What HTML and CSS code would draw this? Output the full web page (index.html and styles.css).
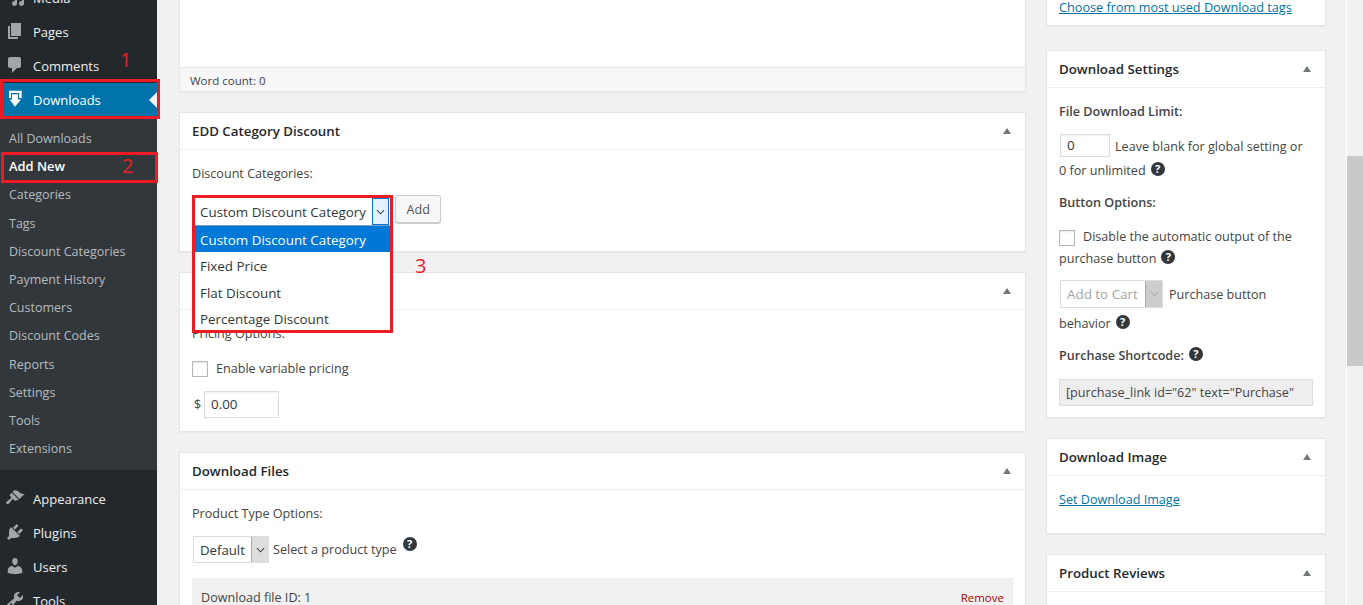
FILE: index.html
```html
<!DOCTYPE html>
<html lang="en">
<head>
<meta charset="utf-8">
<title>Add New Download</title>
<link rel="stylesheet" href="styles.css">
</head>
<body>
<div class="page">
  <nav class="sidebar">
    <ul class="menu menu-top">
      <li class="item"><svg class="ico" viewBox="0 0 20 20"><path d="M13 11V4c0-.55-.45-1-1-1h-1.67L9 1H5L3.67 3H2c-.55 0-1 .45-1 1v7c0 .55.45 1 1 1h10c.55 0 1-.45 1-1zM7 4.5c1.38 0 2.5 1.12 2.5 2.5S8.38 9.5 7 9.5 4.5 8.38 4.5 7 5.62 4.5 7 4.5zM14 6h5v10.5c0 1.38-1.12 2.5-2.5 2.5S14 17.88 14 16.5s1.12-2.5 2.5-2.5c.17 0 .34.02.5.05V9h-3V6zm-4 8.05V13h2v3.5c0 1.38-1.12 2.5-2.5 2.5S7 17.88 7 16.5 8.12 14 9.5 14c.17 0 .34.02.5.05z"/></svg>Media</li>
      <li class="item"><svg class="ico" viewBox="0 0 20 20"><path d="M6 15V2h10v13H6zm-1 1h8v2H3V5h2v11z"/></svg>Pages</li>
      <li class="item"><svg class="ico" viewBox="0 0 20 20"><path d="M5 2h9c1.1 0 2 .9 2 2v7c0 1.1-.9 2-2 2h-2l-5 5v-5H5c-1.1 0-2-.9-2-2V4c0-1.1.9-2 2-2z"/></svg>Comments</li>
      <li class="item item-current"><svg class="ico ico-white" viewBox="0 0 20 20"><path d="M2 .7h12.700V8H12V3H4v5H2z"/><path d="M5 4.300h6v5.200h3L8 16.700 2.800 9.500H5z"/></svg>Downloads</li>
    </ul>
    <ul class="submenu">
      <li>All Downloads</li>
      <li class="sub-current">Add New</li>
      <li>Categories</li>
      <li>Tags</li>
      <li>Discount Categories</li>
      <li>Payment History</li>
      <li>Customers</li>
      <li>Discount Codes</li>
      <li>Reports</li>
      <li>Settings</li>
      <li>Tools</li>
      <li>Extensions</li>
    </ul>
    <ul class="menu menu-bottom">
      <li class="item"><svg class="ico" viewBox="0 0 20 20"><path d="M14.480 11.060L7.410 3.990l1.500-1.500c.5-.56 2.300-.47 3.510.32 1.210.8 1.430 1.280 2.910 2.100 1.180.64 2.450 1.260 4.450.85zm-.71.71L6.700 4.700 4.930 6.470c-.39.39-.39 1.020 0 1.410l1.060 1.060c.39.39.39 1.030 0 1.420-.6.6-1.430 1.110-2.210 1.690-.35.26-.7.53-1.010.84C1.430 13.230.4 14.400 1.500 15.500c1.100 1.100 2.300.13 3.030-.6.4-.4.7-.8.96-1.170.58-.78 1.090-1.610 1.690-2.210.39-.39 1.030-.39 1.420 0l1.060 1.060c.39.39 1.020.39 1.410 0z"/></svg>Appearance</li>
      <li class="item"><svg class="ico" viewBox="0 0 20 20"><path d="M13.110 4.360L9.870 7.600 8 5.730l3.240-3.240c.35-.34 1.050-.2 1.560.32.52.51.66 1.210.31 1.550zm-8 1.770l.91-1.120 9.010 9.010-1.190.84c-.71.71-2.630 1.160-3.820 1.160H6.140L4.900 17.260c-.59.59-1.540.59-2.120 0-.59-.58-.59-1.530 0-2.120l1.240-1.240v-3.880c0-1.130.4-3.190 1.090-3.890zm7.260 3.970l3.240-3.240c.34-.35 1.040-.21 1.550.31.52.51.66 1.210.31 1.550l-3.240 3.250z"/></svg>Plugins</li>
      <li class="item"><svg class="ico" viewBox="0 0 20 20"><path d="M10 9.250c-2.270 0-2.730-3.440-2.730-3.440C7 4.020 7.820 2 9.970 2c2.160 0 2.980 2.020 2.710 3.810 0 0-.41 3.440-2.680 3.440zm0 2.570L12.720 10c2.390 0 4.520 2.330 4.520 4.530v2.490s-3.650 1.130-7.240 1.130c-3.650 0-7.240-1.130-7.240-1.130v-2.490c0-2.250 1.940-4.480 4.470-4.480z"/></svg>Users</li>
      <li class="item"><svg class="ico" viewBox="0 0 20 20"><path d="M16.680 9.770c-1.340 1.340-3.300 1.670-4.950.99l-5.410 6.520c-.99.99-2.590.99-3.580 0s-.99-2.590 0-3.570l6.520-5.420c-.68-1.650-.35-3.610.99-4.950 1.280-1.280 3.120-1.620 4.720-1.060l-2.890 2.890 2.820 2.820 2.890-2.890c.55 1.600.22 3.440-1.060 4.720zm-9.790 5.130c.39-.39.39-1.030 0-1.410-.39-.39-1.030-.39-1.410 0-.39.39-.39 1.030 0 1.410.39.38 1.020.38 1.410 0z"/></svg>Tools</li>
    </ul>
  </nav>

  <main class="content">
    <div class="col-main">
      <section class="card card-editor">
        <div class="editor-space"></div>
        <div class="word-count">Word count: 0</div>
      </section>

      <section class="card card-edd">
        <header class="card-head"><h2>EDD Category Discount</h2><svg class="toggle" viewBox="0 0 8 6"><path d="M4 0l4 6H0z"/></svg></header>
        <div class="card-body">
          <p class="field-label">Discount Categories:</p>
          <div class="add-row">
            <div class="select-spacer"></div>
            <div class="btn">Add</div>
          </div>
        </div>
      </section>

      <section class="card card-prices">
        <header class="card-head"><h2>Download Prices</h2><svg class="toggle" viewBox="0 0 8 6"><path d="M4 0l4 6H0z"/></svg></header>
        <div class="card-body">
          <p class="field-label">Pricing Options:</p>
          <label class="check-row"><span class="checkbox"></span>Enable variable pricing</label>
          <div class="price-row"><span class="currency">$</span><span class="input input-price">0.00</span></div>
        </div>
      </section>

      <section class="card card-files">
        <header class="card-head"><h2>Download Files</h2><svg class="toggle" viewBox="0 0 8 6"><path d="M4 0l4 6H0z"/></svg></header>
        <div class="card-body">
          <p class="field-label">Product Type Options:</p>
          <div class="type-row">
            <div class="select select-default"><span class="select-text">Default</span><span class="select-arrow"><svg viewBox="0 0 10 6"><path d="M1 1l4 4 4-4"/></svg></span></div>
            <span class="type-text">Select a product type</span>
            <span class="help help-type">?</span>
          </div>
          <div class="file-row"><span>Download file ID: 1</span><span class="remove">Remove</span></div>
        </div>
      </section>
    </div>

    <aside class="col-side">
      <section class="card card-tags">
        <a class="link link-tags">Choose from most used Download tags</a>
      </section>

      <section class="card card-settings">
        <header class="card-head"><h2>Download Settings</h2><svg class="toggle" viewBox="0 0 8 6"><path d="M4 0l4 6H0z"/></svg></header>
        <div class="card-body settings-body">
          <p class="set-label">File Download Limit:</p>
          <div class="set-limit"><span class="input input-limit">0</span>Leave blank for global setting or<br>0 for unlimited<span class="help help-limit">?</span></div>
          <p class="set-label set-button">Button Options:</p>
          <div class="set-disable"><span class="checkbox checkbox-side"></span>Disable the automatic output of the<br>purchase button<span class="help help-limit">?</span></div>
          <div class="set-behavior">
            <span class="select select-cart"><span class="select-text">Add to Cart</span><span class="select-arrow arrow-disabled"><svg viewBox="0 0 10 6"><path d="M1 1l4 4 4-4"/></svg></span></span>Purchase button<br>behavior<span class="help help-limit">?</span>
          </div>
          <p class="set-label set-code">Purchase Shortcode:<span class="help help-limit">?</span></p>
          <div class="shortcode">[purchase_link id="62" text="Purchase"</div>
        </div>
      </section>

      <section class="card card-image">
        <header class="card-head"><h2>Download Image</h2><svg class="toggle" viewBox="0 0 8 6"><path d="M4 0l4 6H0z"/></svg></header>
        <div class="card-body"><a class="link">Set Download Image</a></div>
      </section>

      <section class="card card-reviews">
        <header class="card-head"><h2>Product Reviews</h2><svg class="toggle" viewBox="0 0 8 6"><path d="M4 0l4 6H0z"/></svg></header>
      </section>
    </aside>
  </main>

  <div class="scrollbar"><div class="thumb"></div></div>

  <div class="dropdown-wrap">
    <div class="dd-select"><span class="dd-value">Custom Discount Category</span><span class="dd-arrow"><svg viewBox="0 0 10 6"><path d="M1 1l4 4 4-4"/></svg></span></div>
    <ul class="dd-list">
      <li class="dd-active">Custom Discount Category</li>
      <li>Fixed Price</li>
      <li>Flat Discount</li>
      <li>Percentage Discount</li>
    </ul>
  </div>

  <div class="mark mark-1"></div>
  <div class="mark mark-2"></div>
  <span class="num num-1">1</span>
  <span class="num num-2">2</span>
  <span class="num num-3">3</span>
</div>
</body>
</html>
```

FILE: styles.css
```css
*, *::before, *::after { box-sizing: border-box; }
html, body { margin: 0; padding: 0; }
body {
  background: #f1f1f1;
  color: #444;
  font-family: "Open Sans", "Liberation Sans", sans-serif;
  font-size: 12.6px;
  line-height: 18.2px;
}
ul { list-style: none; margin: 0; padding: 0; }
p { margin: 0; }
h2 { margin: 0; font-size: 13.3px; font-weight: 600; color: #23282d; line-height: 18px; }

.page { position: relative; display: flex; width: 1363px; height: 605px; overflow: hidden; }

.sidebar { width: 157px; flex: none; background: #23282d; color: #eee; }
.menu-top { margin-top: -19px; }
.menu-bottom { margin-top: 12px; }
.item { display: flex; align-items: center; height: 34px; font-size: 13px; padding-left: 5px; }
.ico { width: 20px; height: 20px; margin: -2px 8px 0 0; fill: #a0a5aa; flex: none; }
.ico-white { fill: #fff; margin: 0 6px 0 2px; }
.item-current { background: #0073aa; color: #fff; position: relative; }
.item-current::after {
  content: "";
  position: absolute;
  right: 0;
  top: 9px;
  border: 8px solid transparent;
  border-right-color: #f1f1f1;
  border-left-width: 0;
}
.submenu { background: #32373c; padding: 7.900px 0 7.100px; color: rgba(240, 245, 250, .7); font-size: 12.5px; }
.submenu li { padding: 5px 9px; }
.submenu .sub-current { color: #fff; font-weight: 600; font-size: 12.9px; padding: 4px 9px 6px; }

.content { flex: none; width: 1189px; display: flex; padding-left: 22px; }
.col-main { width: 847px; flex: none; display: flex; flex-direction: column; gap: 20px; }
.col-side { width: 280px; flex: none; margin-left: 20px; display: flex; flex-direction: column; gap: 20px; }

.card { background: #fff; border: 1px solid #e5e5e5; box-shadow: 0 1px 1px rgba(0, 0, 0, .04); flex: none; }
.card-head { display: flex; justify-content: space-between; align-items: center; height: 37px; padding: 0 14px 0 12px; border-bottom: 1px solid #eee; }
.toggle { width: 8px; height: 6px; fill: #72777c; }
.card-body { padding: 0 12px; }

.card-editor { height: 92px; border-top: 0; display: flex; flex-direction: column; }
.editor-space { flex: 1; }
.word-count { height: 24px; padding: 4px 10px 0; background: #f7f7f7; border-top: 1px solid #e5e5e5; font-size: 11.5px; color: #444; }

.card-edd { height: 140px; }
.field-label { padding-top: 15px; }
.add-row { display: flex; margin-top: 12px; }
.select-spacer { width: 203px; }
.btn { height: 28px; padding: 0 10.500px; line-height: 28px; color: #555; background: #f7f7f7; border: 1px solid #ccc; border-radius: 3px; box-shadow: 0 1px 0 #ccc; }

.card-prices { height: 160px; }
.check-row { display: flex; align-items: center; margin-top: 17px; }
.checkbox { width: 16px; height: 16px; flex: none; margin-right: 8px; background: #fff; border: 1px solid #b4b9be; box-shadow: inset 0 1px 2px rgba(0,0,0,.1); display: inline-block; }
.price-row { display: flex; align-items: center; margin: 13px 0 0 2px; }
.currency { width: 10px; }
.input { display: inline-block; background: #fff; border: 1px solid #ddd; box-shadow: inset 0 1px 2px rgba(0,0,0,.07); color: #32373c; }
.input-price { width: 75px; height: 27px; padding: 3px 6px; font-size: 13.4px; }

.card-files { height: 200px; }
.type-row { display: flex; align-items: center; margin: 13px 0 0 1px; height: 27px; }
.type-text { padding-top: 1px; }
.select { display: inline-flex; background: #fff; border: 1px solid #ddd; color: #32373c; font-size: 13.2px; }
.select-default { width: 76px; height: 27px; margin-right: 4px; }
.select-text { flex: 1; padding-left: 6px; line-height: 27px; }
.select-arrow { width: 17px; background: #ddd; border-left: 1px solid #aaa; display: flex; align-items: center; justify-content: center; }
.select-arrow svg, .dd-arrow svg { width: 9px; height: 6px; fill: none; stroke: #444; stroke-width: 1.2; }
.help { display: inline-block; width: 14px; height: 14px; border-radius: 50%; background: #32373c; color: #fff; font-size: 11px; font-weight: 700; line-height: 14px; text-align: center; }
.help-type { margin: -11px 0 0 6px; }
.help-limit { margin: 0 0 0 5px; transform: translateY(-2px); }
.file-row { display: flex; justify-content: space-between; margin: 15px 0 0; height: 60px; padding: 10px 8px; background: #f1f1f1; border: 1px solid #eee; }
.remove { color: #a00; font-size: 11.5px; }

.card-tags { height: 27px; margin: -1px 0 4px; padding: 0 12px; border-top: 0; }
.link { color: #0073aa; text-decoration: underline; }
.link-tags { display: block; margin-top: -1px; font-size: 12.7px; }

.card-settings { height: 368px; }
.settings-body { color: #444; }
.set-label { font-weight: 600; }
.settings-body .set-label:first-child { padding-top: 15px; }
.set-limit { margin-top: 13px; line-height: 24px; }
.input-limit { width: 50px; height: 23px; margin: 0 5px 0 1px; padding-left: 6px; font-size: 13.4px; line-height: 21px; vertical-align: 1px; }
.set-button { margin-top: 11px; }
.set-disable { margin-top: 14px; line-height: 22px; }
.checkbox-side { vertical-align: middle; margin-right: 8px; }
.set-behavior { margin-top: 10px; line-height: 29px; }
.select-cart { width: 103px; height: 28px; vertical-align: top; margin: 0 6px 0 1px; color: #a0a5aa; font-size: 13.4px; }
.arrow-disabled { background: #ccc; }
.arrow-disabled svg { stroke: #aaa; }
.set-code { margin-top: 9px; }
.shortcode { margin-top: 13px; height: 27px; line-height: 25px; padding: 0 6px; background: #eee; border: 1px solid #ddd; white-space: nowrap; overflow: hidden; }

.card-image { height: 96px; }
.card-image .card-body { padding-top: 15px; }
.card-reviews { height: 80px; }

.scrollbar { flex: none; width: 17px; background: #f1f1f1; border-left: 1px solid #fff; padding-top: 156px; }
.thumb { height: 210px; background: #c8c8c8; }

.dropdown-wrap { position: absolute; left: 195px; top: 198px; width: 195px; background: #fff; font-size: 13.4px; color: #32373c; }
.dd-select { display: flex; height: 28px; border-bottom: 1px solid #7f9db9; }
.dd-value { flex: 1; padding: 5px 0 0 5px; white-space: nowrap; }
.dd-arrow { width: 17px; height: 27px; margin-right: 1px; border: 1px solid #0078d7; background: #e5f1fb; display: flex; align-items: center; justify-content: center; }
.dd-list li { height: 26.300px; line-height: 28px; padding-left: 5px; }
.dd-active { background: #0078d7; color: #fff; }

.mark { position: absolute; border: 3px solid #ed1c24; }
.mark-1 { left: 0; top: 79px; width: 160px; height: 40px; }
.mark-2 { left: 1px; top: 152px; width: 157px; height: 31px; }
.dropdown-wrap::after { content: ""; position: absolute; left: -3px; top: -3px; width: 201px; height: 138px; border: 3px solid #ed1c24; }
.num { position: absolute; color: #ed1c24; font-size: 20px; line-height: 24px; }
.num-1 { left: 120px; top: 48px; }
.num-2 { left: 122px; top: 154px; }
.num-3 { left: 415px; top: 254px; }
```
